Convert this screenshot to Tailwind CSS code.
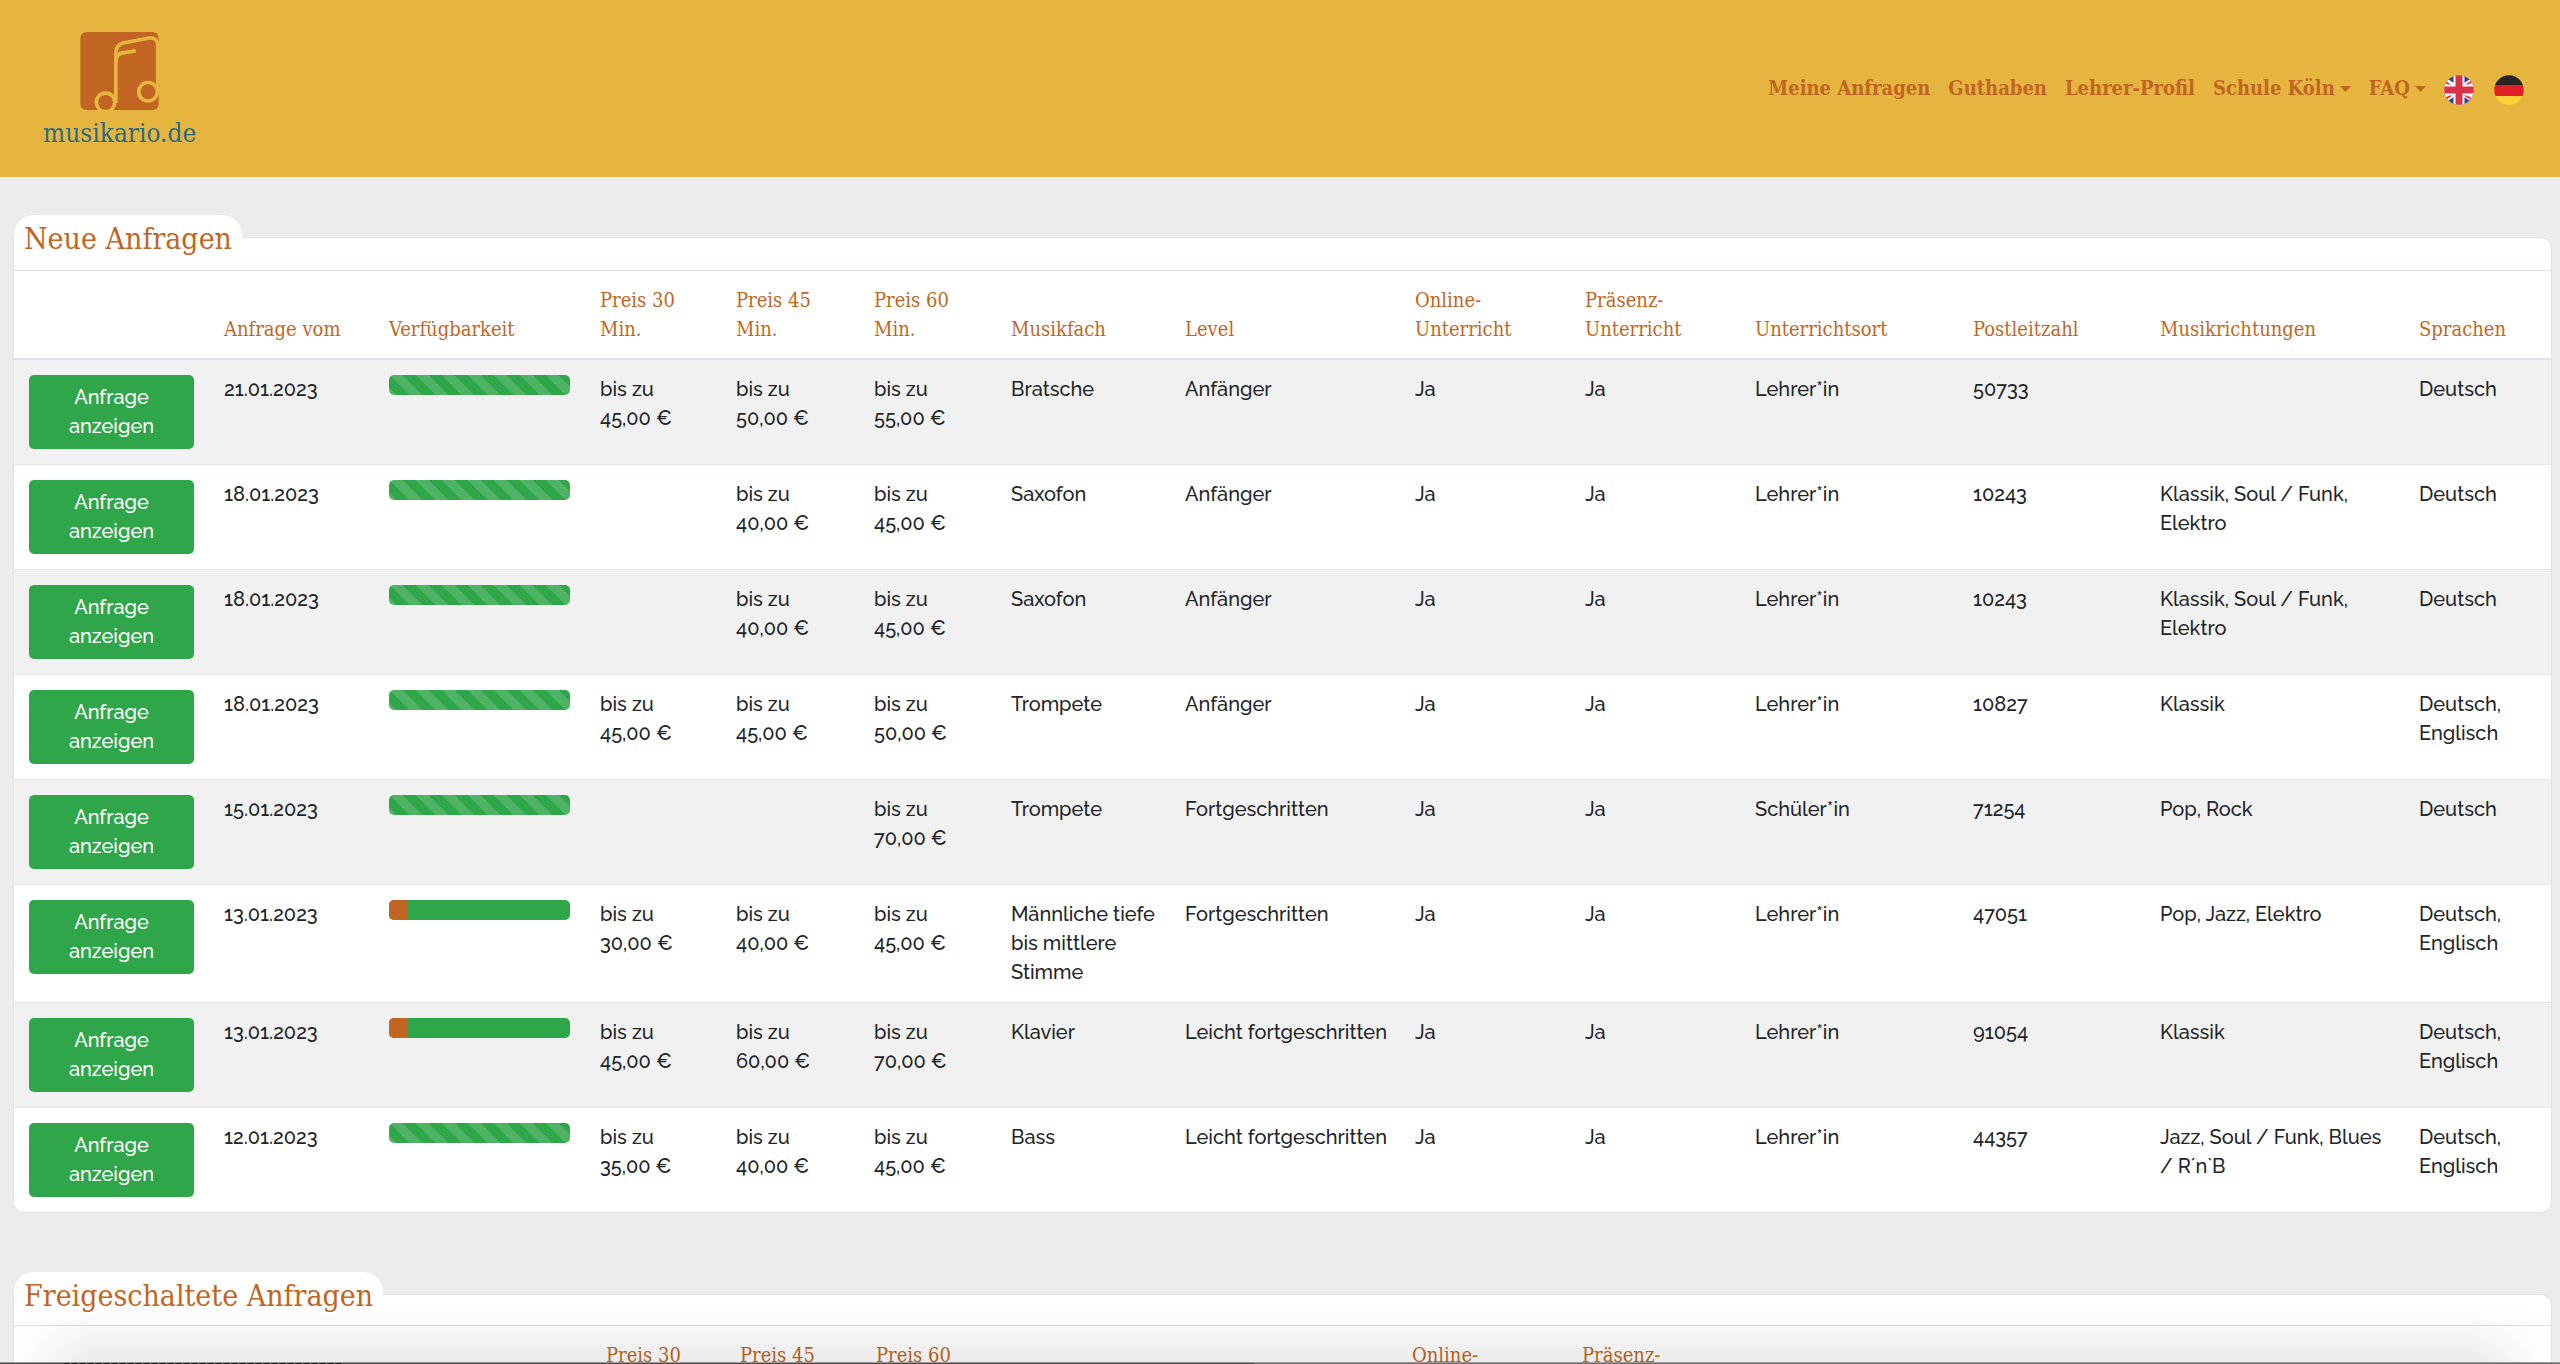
<!DOCTYPE html>
<html lang="de">
<head>
<meta charset="utf-8">
<meta name="viewport" content="width=device-width, initial-scale=1">
<title>musikario.de – Anfragen</title>
<script src="https://cdn.jsdelivr.net/npm/@tailwindcss/browser@4"></script>
</head>
<body class="relative h-screen overflow-hidden bg-[#ececec] font-['Raleway','Lato',sans-serif] text-[20px] leading-[29px] font-medium text-[#212529]">

<header class="flex h-[177px] items-center justify-between bg-[#e6b540] pr-9 pl-[43px] font-['Roboto_Slab','DejaVu_Serif_Condensed','DejaVu_Serif',serif]">
  <a href="#" class="flex flex-col items-center pt-[11px] text-[26px] leading-[46px] font-normal text-[#2d6a7f]">
    <svg class="h-[78px] w-[79px]" viewBox="121 36 236 235" aria-hidden="true">
      <rect x="121" y="36" width="236" height="235" rx="18" fill="#c16622"/>
      <g fill="none" stroke="#e6b540" stroke-width="11">
        <path d="M228 250V100Q228 75 250 69L328 54Q353 52 354 76V216"/>
        <path d="M228 124Q230 102 248 99L288 93"/>
        <circle cx="197" cy="248" r="28"/>
        <circle cx="325" cy="216" r="28"/>
      </g>
    </svg>
    musikario.de
  </a>
  <nav class="flex items-center gap-[18px] text-[20px] leading-[29px] font-bold text-[#c16622]">
    <a href="#">Meine Anfragen</a>
    <a href="#">Guthaben</a>
    <a href="#">Lehrer-Profil</a>
    <a href="#" class="flex items-center gap-[5px]">Schule Köln <svg class="h-[6px] w-[11px]" viewBox="0 0 11 6"><path d="M0 0h11L5.5 6z" fill="currentColor"/></svg></a>
    <a href="#" class="flex items-center gap-[5px]">FAQ <svg class="h-[6px] w-[11px]" viewBox="0 0 11 6"><path d="M0 0h11L5.5 6z" fill="currentColor"/></svg></a>
    <div class="flex items-center gap-5 pt-[2px]">
      <a href="#" aria-label="English">
        <svg class="size-[30px]" viewBox="0 0 30 30">
          <defs><clipPath id="disc"><circle cx="15" cy="15" r="14.7"/></clipPath></defs>
          <g clip-path="url(#disc)">
            <path fill="#27479a" d="M0 0h30v30H0z"/>
            <path stroke="#fff" stroke-width="6" d="M-3 3l36 24M33 3L-3 27"/>
            <path stroke="#dc3350" stroke-width="2" d="M-3 4l18 12M33 3L15 15M-3 27l18-12M33 28L15 16"/>
            <path stroke="#fff" stroke-width="11" d="M15 0v30M0 15h30"/>
            <path stroke="#d9324c" stroke-width="7" d="M15 0v30M0 15h30"/>
          </g>
        </svg>
      </a>
      <a href="#" aria-label="Deutsch">
        <svg class="size-[30px]" viewBox="0 0 30 30">
          <g clip-path="url(#disc)">
            <path fill="#262424" d="M0 0h30v10H0z"/>
            <path fill="#de1f26" d="M0 10h30v11H0z"/>
            <path fill="#fdd035" d="M0 21h30v9H0z"/>
          </g>
        </svg>
      </a>
    </div>
  </nav>
</header>

<main class="flex flex-col gap-[60px] pt-[38px] pr-[9px] pl-[14px]">
  <section>
    <h2 class="relative z-10 w-fit rounded-t-[20px] bg-white px-[10px] font-['Roboto_Slab','DejaVu_Serif_Condensed','DejaVu_Serif',serif] text-[30px] leading-[48px] font-normal text-[#c16622]">Neue Anfragen</h2>
    <div class="-mt-[25px] overflow-hidden rounded-b-[10px] rounded-tr-[10px] bg-white shadow-[0_0_0_1px_rgba(0,0,0,0.04)]">
      <div class="h-8"></div>
      <table class="w-full table-fixed border-separate border-spacing-0 text-left align-top">
        <colgroup id="cols"></colgroup>
        <thead class="font-['Roboto_Slab','DejaVu_Serif_Condensed','DejaVu_Serif',serif] text-[20px] text-[#c16622]"><tr id="head"></tr></thead>
        <tbody id="rows"></tbody>
      </table>
    </div>
  </section>
  <section>
    <h2 class="relative z-10 w-fit rounded-t-[20px] bg-white px-[10px] font-['Roboto_Slab','DejaVu_Serif_Condensed','DejaVu_Serif',serif] text-[30px] leading-[48px] font-normal text-[#c16622]">Freigeschaltete Anfragen</h2>
    <div class="-mt-[25px] overflow-hidden rounded-b-[10px] rounded-tr-[10px] bg-white shadow-[0_0_0_1px_rgba(0,0,0,0.04)]">
      <div class="h-[30px]"></div>
      <table class="w-full table-fixed border-separate border-spacing-0 text-left align-top">
        <colgroup id="cols2"></colgroup>
        <thead class="font-['Roboto_Slab','DejaVu_Serif_Condensed','DejaVu_Serif',serif] text-[20px] text-[#c16622]"><tr id="head2"></tr></thead>
      </table>
    </div>
  </section>
</main>

<!-- Shadow and upper edge of the bar docked at the bottom of the window -->
<div class="pointer-events-none absolute inset-x-0 bottom-0 z-20">
  <div class="h-[56px] bg-linear-to-b from-black/0 to-black/8 mask-[linear-gradient(to_right,transparent_14px,black_90px,black_calc(100%_-_90px),transparent_calc(100%_-_9px))]"></div>
  <div class="h-px bg-[#999]"></div>
  <div class="flex h-px bg-[#6e6e6e]">
    <div class="w-[49%] bg-[#4c4c4c] pl-16"><div class="h-px w-[280px] bg-[repeating-linear-gradient(90deg,#111_0_5px,#4c4c4c_5px_8px)]"></div></div>
  </div>
</div>

<script>
const heads = ['', 'Anfrage vom', 'Verfügbarkeit', 'Preis 30 Min.', 'Preis 45 Min.', 'Preis 60 Min.', 'Musikfach', 'Level', 'Online-Unterricht', 'Präsenz-Unterricht', 'Unterrichtsort', 'Postleitzahl', 'Musikrichtungen', 'Sprachen'];
const shares = [195, 165, 211, 136, 138, 137, 174, 230, 170, 170, 218, 187, 259, 147];
const shares2 = [195, 165, 217, 134, 136, 137, 172, 227, 170, 170, 221, 187, 259, 147];
const rows = [
  ['21.01.2023', 0, '45,00', '50,00', '55,00', 'Bratsche', 'Anfänger', 'Lehrer*in', '50733', '', 'Deutsch'],
  ['18.01.2023', 0, '', '40,00', '45,00', 'Saxofon', 'Anfänger', 'Lehrer*in', '10243', 'Klassik, Soul / Funk, Elektro', 'Deutsch'],
  ['18.01.2023', 0, '', '40,00', '45,00', 'Saxofon', 'Anfänger', 'Lehrer*in', '10243', 'Klassik, Soul / Funk, Elektro', 'Deutsch'],
  ['18.01.2023', 0, '45,00', '45,00', '50,00', 'Trompete', 'Anfänger', 'Lehrer*in', '10827', 'Klassik', 'Deutsch, Englisch'],
  ['15.01.2023', 0, '', '', '70,00', 'Trompete', 'Fortgeschritten', 'Schüler*in', '71254', 'Pop, Rock', 'Deutsch'],
  ['13.01.2023', 10, '30,00', '40,00', '45,00', 'Männliche tiefe bis mittlere Stimme', 'Fortgeschritten', 'Lehrer*in', '47051', 'Pop, Jazz, Elektro', 'Deutsch, Englisch'],
  ['13.01.2023', 10, '45,00', '60,00', '70,00', 'Klavier', 'Leicht fortgeschritten', 'Lehrer*in', '91054', 'Klassik', 'Deutsch, Englisch'],
  ['12.01.2023', 0, '35,00', '40,00', '45,00', 'Bass', 'Leicht fortgeschritten', 'Lehrer*in', '44357', 'Jazz, Soul / Funk, Blues /&nbsp;R´n`B', 'Deutsch, Englisch']
];
const cols = list => { const sum = list.reduce((a, b) => a + b, 0); return list.map(n => `<col style="width:${n / sum * 100}%">`).join(''); };
const headCells = heads.map(h => `<th scope="col" class="border-t border-b-2 border-[#dee2e6] px-[15px] pt-[15px] pb-[14px] align-bottom font-normal">${h.replace('-', '-<br>').replace(' Min.', '<br>Min.')}</th>`).join('');
document.getElementById('cols').innerHTML = cols(shares);
document.getElementById('cols2').innerHTML = cols(shares2);
document.getElementById('head').innerHTML = headCells;
document.getElementById('head2').innerHTML = headCells;

const cell = (html, first, wide) => `<td class="py-[15px] pl-[15px] align-top ${wide ? 'pr-[15px]' : 'pr-2'} ${first ? '' : 'border-t border-[#e4e7ea]'}">${html}</td>`;
const price = p => p ? `bis zu<br>${p} €` : '';
const bar = used => used
  ? `<div class="flex h-5 overflow-hidden rounded-[5px] bg-[#30a64a]"><div class="bg-[#c16622]" style="width:${used}%"></div></div>`
  : `<div class="h-5 rounded-[5px] bg-[#30a64a] bg-[linear-gradient(45deg,rgba(255,255,255,.15)_25%,transparent_25%,transparent_50%,rgba(255,255,255,.15)_50%,rgba(255,255,255,.15)_75%,transparent_75%,transparent)] bg-size-[26px_26px]"></div>`;
document.getElementById('rows').innerHTML = rows.map((r, i) => {
  const [date, used, p30, p45, p60, subject, level, place, zip, styles, langs] = r;
  const cells = ['<button type="button" class="block w-full rounded-[5px] bg-[#30a64a] px-3 py-2 text-white">Anfrage<br>anzeigen</button>', date, bar(used), price(p30), price(p45), price(p60), subject, level, 'Ja', 'Ja', place, zip, styles, langs];
  return `<tr class="${i % 2 ? '' : 'bg-[#f1f1f1]'}">${cells.map((c, n) => cell(c, i === 0, n === 0 || n === 2)).join('')}</tr>`;
}).join('');
</script>
</body>
</html>
